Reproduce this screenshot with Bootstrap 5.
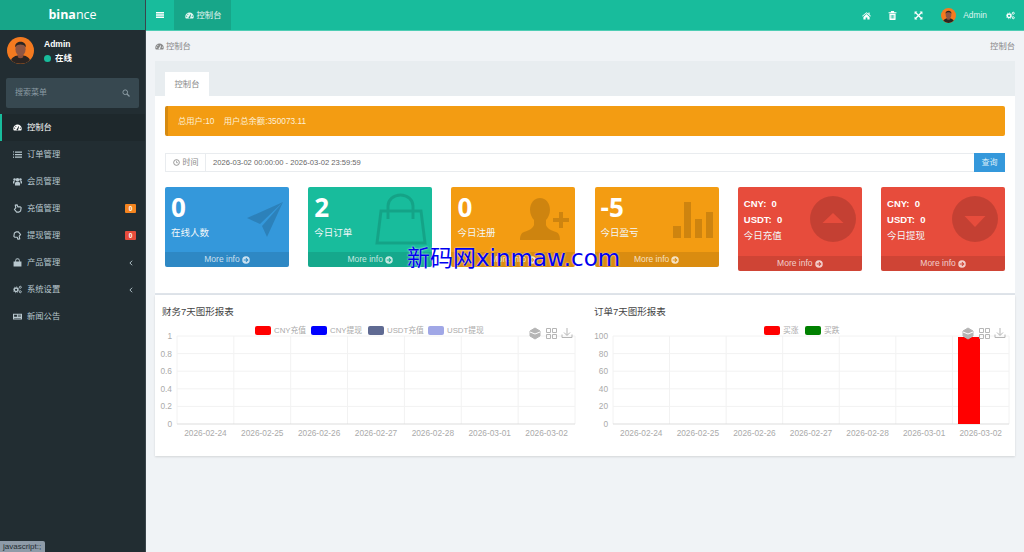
<!DOCTYPE html>
<html lang="zh">
<head>
<meta charset="UTF-8">
<title>控制台</title>
<link href="https://cdn.jsdelivr.net/npm/bootstrap@5.3.0/dist/css/bootstrap.min.css" rel="stylesheet">
<style>
  html, body { height: 552px; overflow: hidden; }
  body { font-family: "Liberation Sans", "Noto Sans CJK SC", sans-serif; font-size: 8.3px; background: #f0f3f6; color: #555; }
  svg { display: block; flex: none; }
  .app-shell { height: 552px; }
  .side { width: 146px; background: #222d32; border-right: 1px solid #3a454b; color: #b8c7ce; }
  .logo { height: 30px; background: #17a689; color: #fff; font: 400 12.5px/30px "Open Sans", sans-serif; text-align: center; }
  .logo b { font-weight: 700; }
  .user-row { height: 48px; padding: 7px 0 0 7px; gap: 10px; }
  .user-name { color: #fff; font-size: 8.5px; font-weight: 700; line-height: 14px; }
  .online-dot { width: 7px; height: 7px; border-radius: 50%; background: #18bc9c; }
  .side-search { margin: 0 6px; height: 30px; background: #374850; border-radius: 2px; padding: 0 9px; color: #8a9aa2; font-size: 8px; }
  .menu { margin-top: 6px; }
  .menu-row { height: 27px; padding: 0 9px 0 13px; gap: 5px; }
  .menu-row.on { background: #1e282c; border-left: 2px solid #18bc9c; color: #fff; padding-left: 11px; }
  .menu-ico { width: 9px; height: 9px; }
  .menu-chev { margin-right: 2px; }
  .tag { width: 11px; height: 9px; border-radius: 1px; color: #fff; font-size: 6.5px; line-height: 9px; text-align: center; font-weight: 700; }
  .top { height: 31px; background: #18bc9c; border-bottom: 1px solid #4fcdb4; color: #fff; }
  .top-toggle { width: 28px; }
  .top-tab { width: 57px; height: 30px; background: #17a689; gap: 3px; padding-left: 1px; color: #e5f6f2; }
  .top-link { gap: 17px; padding-right: 9px; }
  .top-link svg.ti { width: 9px; height: 9px; }
  .top-me { gap: 7px; margin-left: 1px; margin-right: 2px; }
  .top-user { color: #dff5f0; font-size: 8.4px; padding-top: 1px; }
  .crumbs { height: 30px; padding: 0 9px; color: #888; }
  .crumb-main { gap: 2px; }
  .panel-wrap { margin: 0 9px; background: #fff; }
  .tab-strip { height: 35px; background: #e8edf0; padding: 11px 0 0 10px; }
  .tab-on { width: 44px; height: 24px; background: #fff; color: #888; text-align: center; line-height: 24px; }
  .panel-inner { padding: 10px 10px 22px; height: 197px; }
  .notice { height: 30px; background: #f39c12; border-left: 3px solid #d68a10; border-radius: 2px; color: #fdf0d8; padding-left: 10px; margin-bottom: 17px; font-size: 8.3px; }
  .date-line { height: 19px; border: 1px solid #e9ecef; margin-bottom: 15px; color: #666; font-size: 7.6px; }
  .date-tag { width: 40px; height: 100%; border-right: 1px solid #e9ecef; gap: 3px; color: #888; font-size: 8px; }
  .date-value { padding-left: 7px; }
  .query-btn { width: 31px; height: 19px; margin: -1px -1px -1px 0; background: #3498db; color: #d9edf9; font-size: 8px; line-height: 19px; text-align: center; }
  .stat-row { gap: 19.2px; }
  .stat { flex: 1 1 0; height: 80px; position: relative; overflow: hidden; color: #fff; border-radius: 2px; }
  .stat.tall { height: 84px; }
  .stat-body { flex: 1; padding: 0 6px; }
  .stat-num { font: 700 26px/36px "Open Sans", sans-serif; margin-top: 2px; }
  .stat-label { font-size: 9.5px; line-height: 13px; margin-top: 1px; color: #f2f7f9; }
  .money { font-size: 9.5px; font-weight: 700; line-height: 16px; }
  .money:first-child { margin-top: 9px; }
  .stat-foot { height: 15px; background: rgba(0,0,0,.1); color: rgba(255,255,255,.75); text-align: center; font-size: 8.5px; gap: 2px; }
  .stat-art { position: absolute; top: 0; left: 0; }
  .bg-c-blue { background: #3498db; }
  .bg-c-teal { background: #18bc9c; }
  .bg-c-orange { background: #f39c12; }
  .bg-c-red { background: #e74c3c; }
  .chart-card { margin: 0 9px; height: 161px; background: #fff; box-shadow: 0 1px 2px rgba(0,0,0,.12); }
  .chart-cut { height: 2px; margin: 0 9px; background: #dfe4ea; }
  .chart-col { width: 430px; }
  .chart-title { height: 25px; padding: 11px 0 0 7px; font-size: 9.5px; line-height: 12px; color: #444; }
  .chart-col + .chart-col .chart-title { padding-left: 9px; }
  .chart-svg text { font-family: "Liberation Sans", "Noto Sans CJK SC", sans-serif; font-size: 8.3px; fill: #aaa; }
  .chart-svg text.lg { font-size: 7.8px; }
  .watermark { position: absolute; left: 407px; top: 243px; color: #0000f0; font: 400 23px/30px "DejaVu Sans", "Noto Sans CJK SC", sans-serif; text-shadow: 0 0 2px #fff; white-space: nowrap; }
  .status-tip { position: absolute; left: 0; bottom: 0; width: 45px; height: 11px; background: #8e9ba8; color: #222d32; font-size: 8px; line-height: 11px; padding-left: 3px; border-top-right-radius: 2px; }
</style>
</head>
<body>

<svg width="0" height="0" style="position:absolute">
  <symbol id="i-dash" viewBox="0 0 16 16"><path fill-rule="evenodd" d="M8 2.500A7.500 7.500 0 0 0 .5 10c0 1.400.4 2.600 1 3.500h13c.6-.9 1-2.100 1-3.500A7.500 7.500 0 0 0 8 2.500zM3 10.200a1 1 0 1 1 0-2 1 1 0 0 1 0 2zm2-3.500a1 1 0 1 1 0-2 1 1 0 0 1 0 2zm4.300 4.800a1.500 1.500 0 1 1-2-1.500L9.800 5.600l1 .4zM13 10.200a1 1 0 1 1 0-2 1 1 0 0 1 0 2z"/></symbol>
  <symbol id="i-list" viewBox="0 0 16 16"><path d="M0 2h1.500v2.500H0zM0 6.800h1.500v2.500H0zM0 11.500h1.500V14H0zM3.500 2.500H16v2.300H3.500zM3.500 7H16v2.300H3.500zM3.500 11.500H16v2.300H3.500z"/></symbol>
  <symbol id="i-users" viewBox="0 0 16 16"><circle cx="8" cy="5" r="3.200"/><circle cx="2.800" cy="4.500" r="2.300"/><circle cx="13.200" cy="4.500" r="2.300"/><path d="M3.500 15v-3.500C3.500 9.500 5 8.500 8 8.500s4.500 1 4.500 3V15zM0 11.500V9c0-1.500.9-2.300 2.500-2.300.4 0 .7 0 1 .2-.7.700-1.100 1.800-1.100 4.600zM16 11.500V9c0-1.500-.9-2.300-2.500-2.300-.4 0-.7 0-1 .2.700.700 1.100 1.800 1.100 4.600z"/></symbol>
  <symbol id="i-hand-up" viewBox="0 0 16 16"><path fill="none" stroke="currentColor" stroke-width="2" stroke-linejoin="round" d="M4 2l3.500-.5L8.500 5h4.500l1.500 1.500-1 6L10 14.500H6.500L2.500 9.500 5 7z"/></symbol>
  <symbol id="i-hand-down" viewBox="0 0 16 16"><path fill="none" stroke="currentColor" stroke-width="2" stroke-linejoin="round" d="M12 14l-3.500.5L7.500 11H3L1.500 9.500l1-6L6 1.500h3.500l4 5L11 9z"/></symbol>
  <symbol id="i-bag" viewBox="0 0 16 16"><path d="M1 6h3V4.500a4 4 0 0 1 8 0V6h3v9H1zM5.500 6h5V4.500a2.500 2.500 0 0 0-5 0z"/></symbol>
  <symbol id="i-cogs" viewBox="0 0 16 16"><circle cx="5.500" cy="8.500" r="3.300" fill="none" stroke="currentColor" stroke-width="2.600"/><circle cx="5.500" cy="8.500" r="5.200" fill="none" stroke="currentColor" stroke-width="1.200" stroke-dasharray="2 2"/><circle cx="13" cy="4" r="1.800" fill="none" stroke="currentColor" stroke-width="1.600"/><circle cx="13" cy="12" r="1.800" fill="none" stroke="currentColor" stroke-width="1.600"/></symbol>
  <symbol id="i-news" viewBox="0 0 16 16"><path fill-rule="evenodd" d="M0 3h16v10.500H0zM2 5v3.500h5V5zM8.500 5v1H14V5zM8.500 7.500v1H14v-1zM2 10.500v1h12v-1z"/></symbol>
  <symbol id="i-search" viewBox="0 0 16 16"><circle cx="6.500" cy="6.500" r="4.700" fill="none" stroke="currentColor" stroke-width="2"/><path stroke="currentColor" stroke-width="2.400" d="M10 10l5 5"/></symbol>
  <symbol id="i-home" viewBox="0 0 16 16"><path d="M8 2L0 8.800l1 1.100L8 4l7 5.900 1-1.100-2.500-2.100V2.500h-2v2.500zM2.500 10.500V15h4v-3.500h3V15h4v-4.500L8 5.500z"/></symbol>
  <symbol id="i-trash" viewBox="0 0 16 16"><path fill-rule="evenodd" d="M5.500 0h5l.8 2H15v1.800H1V2h3.700zM2.500 5h11v9.500a1.500 1.500 0 0 1-1.500 1.500H4a1.500 1.500 0 0 1-1.500-1.500zM5 7v6.500h1.200V7zM7.400 7v6.500h1.200V7zM9.800 7v6.500H11V7z"/></symbol>
  <symbol id="i-expand" viewBox="0 0 16 16"><path d="M1 1h5L4.300 2.700 8 6.400l3.700-3.700L10 1h5v5l-1.700-1.700L9.600 8l3.700 3.700L15 10v5h-5l1.700-1.700L8 9.600l-3.700 3.700L6 15H1v-5l1.700 1.700L6.400 8 2.700 4.300 1 6z"/></symbol>
  <symbol id="i-go" viewBox="0 0 16 16"><path fill-rule="evenodd" d="M8 .5a7.500 7.500 0 1 0 0 15 7.500 7.500 0 0 0 0-15zM8.500 3.500L13 8l-4.500 4.500-1.400-1.400 2.100-2.100H3.500V7h5.700L7.100 4.900z"/></symbol>
  <symbol id="i-clock" viewBox="0 0 16 16"><circle cx="8" cy="8" r="6.500" fill="none" stroke="currentColor" stroke-width="2"/><path fill="none" stroke="currentColor" stroke-width="1.500" d="M8 4v4.500h3.500"/></symbol>
  <symbol id="i-chev" viewBox="0 0 16 16"><path fill="none" stroke="currentColor" stroke-width="2.500" d="M11 2L5 8l6 6"/></symbol>
  <symbol id="i-avatar" viewBox="0 0 40 40"><circle cx="20" cy="20" r="20" fill="#f47a20"/><path fill="#2b2523" d="M6 34c3-6 9-7 14-7s11 1 14 7a20 20 0 0 1-28 0z"/><path fill="#8a4f3c" d="M16 24h8v6c-2 2-6 2-8 0z"/><ellipse cx="20" cy="18" rx="7.500" ry="10" fill="#8f5543"/><path fill="#2b2523" d="M12 15c0-6 4-8 8-8s8 2 8 8c-2-3-5-4-8-4s-6 1-8 4z"/></symbol>
</svg>

<div class="app-shell d-flex">
  <aside class="side flex-shrink-0">
    <div class="logo"><b>bina</b>nce</div>
    <div class="user-row d-flex">
      <svg width="27" height="27"><use href="#i-avatar"/></svg>
      <div>
        <div class="user-name">Admin</div>
        <div class="user-name d-flex align-items-center gap-1"><span class="online-dot"></span>在线</div>
      </div>
    </div>
    <div class="side-search d-flex align-items-center justify-content-between">
      <span>搜索菜单</span>
      <svg width="8" height="8" fill="currentColor"><use href="#i-search"/></svg>
    </div>
    <div class="menu" id="menu"></div>
  </aside>

  <div class="flex-grow-1">
    <header class="top d-flex align-items-center">
      <div class="top-toggle d-flex justify-content-center">
        <svg width="8" height="8" viewBox="0 0 16 16" fill="#fff"><path d="M0 2h16v3H0zM0 6.500h16v3H0zM0 11h16v3H0z"/></svg>
      </div>
      <div class="top-tab d-flex align-items-center justify-content-center">
        <svg class="menu-ico" fill="currentColor"><use href="#i-dash"/></svg>控制台
      </div>
      <div class="top-link d-flex align-items-center ms-auto">
        <svg class="ti" fill="#fff"><use href="#i-home"/></svg>
        <svg class="ti" fill="#fff"><use href="#i-trash"/></svg>
        <svg class="ti" fill="#fff"><use href="#i-expand"/></svg>
        <span class="top-me d-flex align-items-center">
          <svg width="15" height="15"><use href="#i-avatar"/></svg>
          <span class="top-user">Admin</span>
        </span>
        <svg class="ti" fill="#fff" color="#fff"><use href="#i-cogs"/></svg>
      </div>
    </header>

    <div class="crumbs d-flex align-items-center justify-content-between">
      <span class="crumb-main d-flex align-items-center"><svg class="menu-ico" fill="currentColor"><use href="#i-dash"/></svg>控制台</span>
      <span>控制台</span>
    </div>

    <div class="panel-wrap">
      <div class="tab-strip"><div class="tab-on">控制台</div></div>
      <div class="panel-inner">
        <div class="notice d-flex align-items-center">总用户:10 &nbsp;&nbsp; 用户总余额:350073.11</div>
        <div class="date-line d-flex align-items-center">
          <span class="date-tag d-flex align-items-center justify-content-center"><svg width="7" height="7" fill="currentColor"><use href="#i-clock"/></svg>时间</span>
          <span class="date-value flex-grow-1">2026-03-02 00:00:00 - 2026-03-02 23:59:59</span>
          <span class="query-btn">查询</span>
        </div>
        <div class="stat-row d-flex align-items-start">
          <div class="stat bg-c-blue d-flex flex-column">
            <div class="stat-body"><div class="stat-num">0</div><div class="stat-label">在线人数</div></div>
            <svg class="stat-art" width="124" height="65" fill="rgba(0,0,0,.15)"><path d="M118 15L82 31l13 6zM118 15L97 39l5 11z"/></svg>
            <div class="stat-foot d-flex align-items-center justify-content-center">More info <svg width="8" height="8" fill="currentColor"><use href="#i-go"/></svg></div>
          </div>
          <div class="stat bg-c-teal d-flex flex-column">
            <div class="stat-body"><div class="stat-num">2</div><div class="stat-label">今日订单</div></div>
            <svg class="stat-art" width="124" height="65" fill="none" stroke="rgba(0,0,0,.13)" stroke-width="3"><path d="M73 24h40l4 32H69zM80 32V19a12.500 11 0 0 1 25 0v13"/></svg>
            <div class="stat-foot d-flex align-items-center justify-content-center">More info <svg width="8" height="8" fill="currentColor"><use href="#i-go"/></svg></div>
          </div>
          <div class="stat bg-c-orange d-flex flex-column">
            <div class="stat-body"><div class="stat-num">0</div><div class="stat-label">今日注册</div></div>
            <svg class="stat-art" width="124" height="65" fill="rgba(0,0,0,.15)"><path d="M89 11c-6 0-10 5-10 12 0 4 2 8 4 10v5c-1 3-4 5-10 7-3 1-4 4-4 8h40c0-4-1-7-4-8-6-2-9-4-10-7v-5c2-2 4-6 4-10 0-7-4-12-10-12z"/><path d="M108 25h4v6h6v4h-6v6h-4v-6h-6v-4h6z"/></svg>
            <div class="stat-foot d-flex align-items-center justify-content-center">More info <svg width="8" height="8" fill="currentColor"><use href="#i-go"/></svg></div>
          </div>
          <div class="stat bg-c-orange d-flex flex-column">
            <div class="stat-body"><div class="stat-num">-5</div><div class="stat-label">今日盈亏</div></div>
            <svg class="stat-art" width="124" height="65" fill="rgba(0,0,0,.15)"><path d="M78 39h8v12h-8zM89 15h7v36h-7zM100 32h7v19h-7zM111 25h7v26h-7z"/></svg>
            <div class="stat-foot d-flex align-items-center justify-content-center">More info <svg width="8" height="8" fill="currentColor"><use href="#i-go"/></svg></div>
          </div>
          <div class="stat tall bg-c-red d-flex flex-column">
            <div class="stat-body"><div class="money">CNY:&nbsp; 0</div><div class="money">USDT:&nbsp; 0</div><div class="stat-label">今日充值</div></div>
            <svg class="stat-art" width="124" height="69"><circle cx="95" cy="32" r="23" fill="rgba(0,0,0,.15)"/><path fill="#e74c3c" d="M84.500 36L95 26l10.500 10z"/></svg>
            <div class="stat-foot d-flex align-items-center justify-content-center">More info <svg width="8" height="8" fill="currentColor"><use href="#i-go"/></svg></div>
          </div>
          <div class="stat tall bg-c-red d-flex flex-column">
            <div class="stat-body"><div class="money">CNY:&nbsp; 0</div><div class="money">USDT:&nbsp; 0</div><div class="stat-label">今日提现</div></div>
            <svg class="stat-art" width="124" height="69"><circle cx="94" cy="32" r="23" fill="rgba(0,0,0,.15)"/><path fill="#e74c3c" d="M83.500 29h21L94 40z"/></svg>
            <div class="stat-foot d-flex align-items-center justify-content-center">More info <svg width="8" height="8" fill="currentColor"><use href="#i-go"/></svg></div>
          </div>
        </div>
      </div>
    </div>
    <div class="chart-cut"></div>
    <div class="chart-card d-flex">
      <div class="chart-col"><div class="chart-title">财务7天图形报表</div><svg class="chart-svg" id="chart-a" width="430" height="136"></svg></div>
      <div class="chart-col"><div class="chart-title">订单7天图形报表</div><svg class="chart-svg" id="chart-b" width="430" height="136"></svg></div>
    </div>
  </div>
</div>

<div class="watermark">新码网xinmaw.com</div>
<div class="status-tip">javascript:;</div>

<script>
  const menuItems = [
    ["i-dash", "控制台"], ["i-list", "订单管理"], ["i-users", "会员管理"],
    ["i-hand-up", "充值管理", "0", "#f5841f"], ["i-hand-down", "提现管理", "0", "#e74c3c"],
    ["i-bag", "产品管理", "<"], ["i-cogs", "系统设置", "<"], ["i-news", "新闻公告"]
  ];
  document.getElementById("menu").innerHTML = menuItems.map(function (m, i) {
    let tail = "";
    if (m[2] === "<") tail = '<svg class="menu-chev ms-auto" width="6" height="6" fill="currentColor"><use href="#i-chev"/></svg>';
    else if (m[2]) tail = '<span class="tag ms-auto" style="background:' + m[3] + '">' + m[2] + '</span>';
    return '<div class="menu-row d-flex align-items-center' + (i === 0 ? ' on' : '') + '">' +
      '<svg class="menu-ico" fill="currentColor" color="currentColor"><use href="#' + m[0] + '"/></svg><span>' + m[1] + '</span>' + tail + '</div>';
  }).join("");

  const days = ["2026-02-24", "2026-02-25", "2026-02-26", "2026-02-27", "2026-02-28", "2026-03-01", "2026-03-02"];

  // sizes in px relative to the svg box, top of box is y=320 on the page
  function drawChart(id, x0, x1, yLabels, legend, tools, bar) {
    const top = 16, bottom = 104;
    let s = "";
    const stepX = (x1 - x0) / 7, stepY = (bottom - top) / 5;
    for (let i = 0; i <= 7; i++) {
      const x = x0 + stepX * i;
      s += '<path d="M' + x + ' ' + top + 'V' + bottom + '" stroke="#f2f2f2"/>';
    }
    for (let i = 0; i <= 5; i++) {
      const y = top + stepY * i;
      s += '<path d="M' + x0 + ' ' + y + 'H' + x1 + '" stroke="' + (i === 5 ? '#ddd' : '#f2f2f2') + '"/>';
      s += '<text x="' + (x0 - 5) + '" y="' + (y + 3) + '" text-anchor="end">' + yLabels[i] + '</text>';
    }
    days.forEach(function (d, i) {
      s += '<text x="' + (x0 + stepX * (i + .5)) + '" y="116" text-anchor="middle">' + d + '</text>';
    });
    legend.forEach(function (l) {
      s += '<rect x="' + l[0] + '" y="6" width="16" height="9" rx="2" fill="' + l[2] + '"/>';
      s += '<text class="lg" x="' + (l[0] + 19) + '" y="13">' + l[1] + '</text>';
    });
    if (bar) s += '<rect x="' + bar[0] + '" y="17" width="22" height="87" fill="#ff0000"/>';
    s += '<g transform="translate(' + tools + ' 8)" fill="none" stroke="#b5b5b5">' +
      '<path fill="#b5b5b5" d="M1 3l5-3 5 3v5l-5 3-5-3z"/><path stroke="#fff" d="M1 4l5 2 5-2"/>' +
      '<path d="M17.500 .5h4v4h-4zM23.500 .5h4v4h-4zM17.500 6.500h4v4h-4zM23.500 6.500h4v4h-4z"/>' +
      '<path d="M33 6.500v3h10v-3M38 0v7M35 4.500l3 3 3-3"/></g>';
    document.getElementById(id).innerHTML = s;
  }

  drawChart("chart-a", 22, 420, ["1", "0.8", "0.6", "0.4", "0.2", "0"],
    [[100, "CNY充值", "#ff0000"], [156, "CNY提现", "#0000ff"], [213, "USDT充值", "#5f6a92"], [273, "USDT提现", "#a0a7e6"]], 374);
  drawChart("chart-b", 28, 424, ["100", "80", "60", "40", "20", "0"],
    [[179, "买涨", "#ff0000"], [220, "买跌", "#008000"]], 377, [373]);
</script>
<script src="https://cdn.jsdelivr.net/npm/bootstrap@5.3.0/dist/js/bootstrap.bundle.min.js"></script>
</body>
</html>
